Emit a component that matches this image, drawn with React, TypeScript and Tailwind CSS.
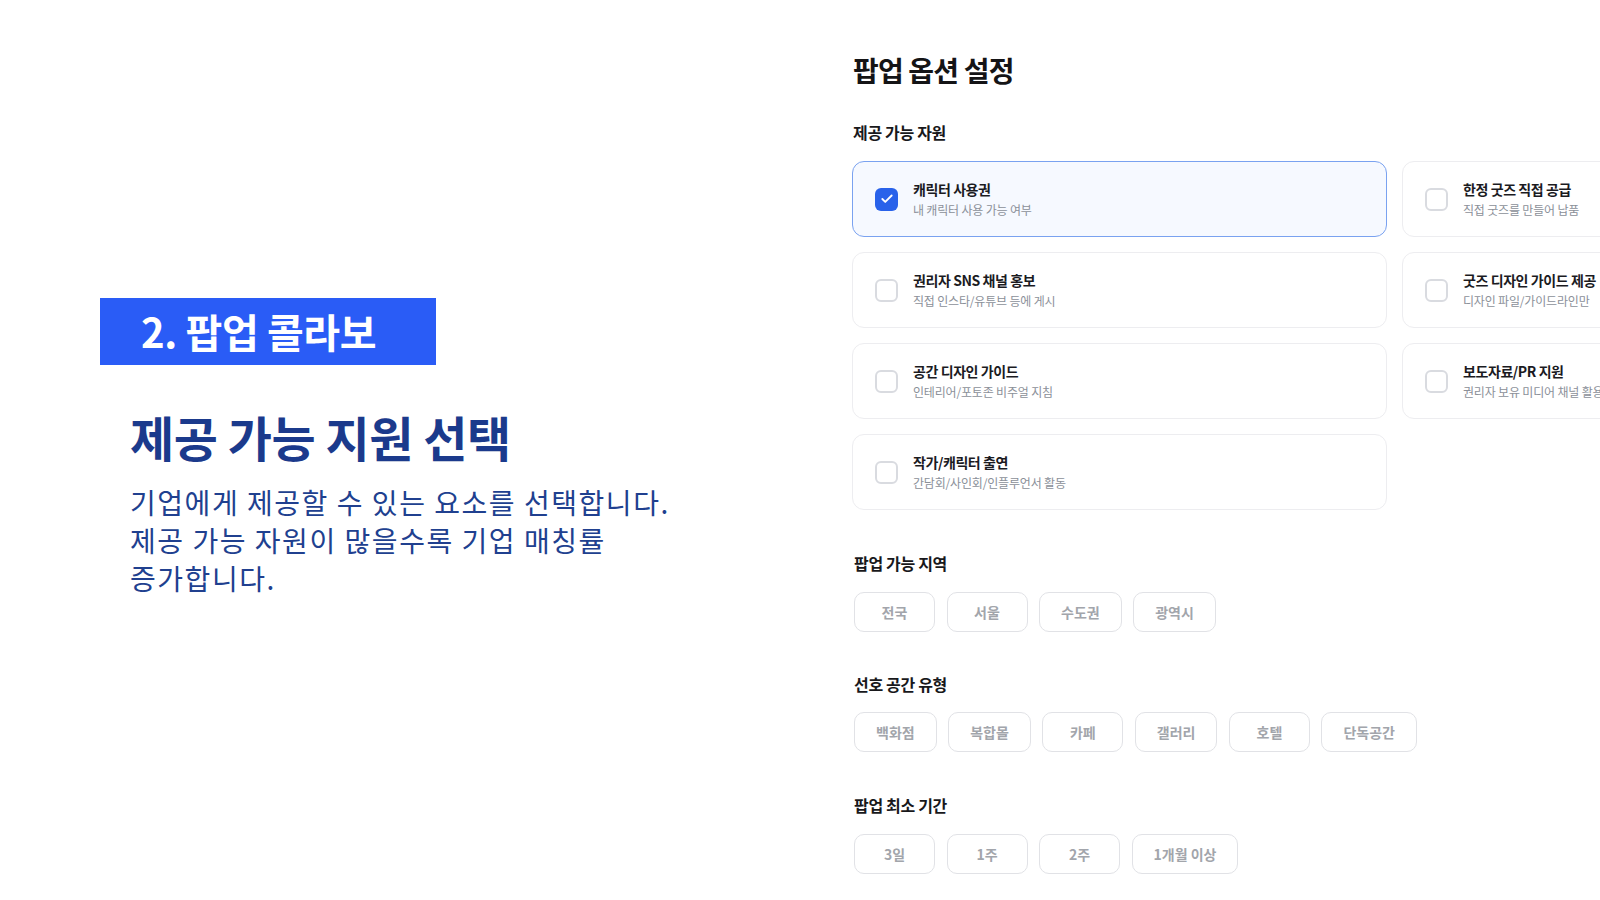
import { Check } from 'lucide-react'

interface ResourceOption {
  title: string
  desc: string
  checked?: boolean
}

const resources: ResourceOption[] = [
  { title: '캐릭터 사용권', desc: '내 캐릭터 사용 가능 여부', checked: true },
  { title: '한정 굿즈 직접 공급', desc: '직접 굿즈를 만들어 납품' },
  { title: '권리자 SNS 채널 홍보', desc: '직접 인스타/유튜브 등에 게시' },
  { title: '굿즈 디자인 가이드 제공', desc: '디자인 파일/가이드라인만' },
  { title: '공간 디자인 가이드', desc: '인테리어/포토존 비주얼 지침' },
  { title: '보도자료/PR 지원', desc: '권리자 보유 미디어 채널 활용' },
  { title: '작가/캐릭터 출연', desc: '간담회/사인회/인플루언서 활동' }
]

const regions = ['전국', '서울', '수도권', '광역시']
const spaces = ['백화점', '복합몰', '카페', '갤러리', '호텔', '단독공간']
const periods = ['3일', '1주', '2주', '1개월 이상']

const ResourceCard = (props: ResourceOption) => {
  return (
    <div
      className={
        props.checked
          ? 'flex h-[76px] items-center rounded-[12px] border-[1.5px] border-[#7aa2f0] bg-[#f6f9ff] pl-[22px]'
          : 'flex h-[76px] items-center rounded-[12px] border-[1.5px] border-[#ededf0] bg-white pl-[22px]'
      }
    >
      {props.checked ? (
        <div className="flex size-[23px] shrink-0 items-center justify-center rounded-[6px] bg-[#2962ea]">
          <Check size={14} strokeWidth={3.2} className="text-white" />
        </div>
      ) : (
        <div className="size-[23px] shrink-0 rounded-[6px] border-2 border-[#d9dbe0] bg-white" />
      )}
      <div className="ml-[15px] flex min-w-0 flex-col gap-[4px] whitespace-nowrap">
        <span className="text-[14px] leading-[18px] font-bold tracking-[-0.03em] text-[#1b1b1f]">{props.title}</span>
        <span className="text-[12px] leading-[16px] tracking-[-0.015em] text-[#8b9099]">{props.desc}</span>
      </div>
    </div>
  )
}

const ChipRow = (props: { items: string[] }) => {
  return (
    <div className="flex gap-[11.5px]">
      {props.items.map((item) => (
        <div
          key={item}
          className="flex h-[40px] min-w-[81px] items-center justify-center rounded-[10px] border-[1.5px] border-[#e1e2e6] bg-white px-[21px] text-[14px] font-semibold whitespace-nowrap text-[#a2a5ab]"
        >
          {item}
        </div>
      ))}
    </div>
  )
}

const SectionLabel = (props: { children: string }) => {
  return (
    <h3 className="text-[16px] leading-[20px] font-bold tracking-[-0.02em] text-[#18181b]">{props.children}</h3>
  )
}

export default function App() {
  return (
    <div
      className="flex h-[900px] w-[1600px] overflow-hidden bg-white"
      style={{ fontFamily: '"Noto Sans CJK KR", "Noto Sans", sans-serif' }}
    >
      <div className="flex w-[852px] shrink-0 flex-col pt-[298px] pl-[100px]">
        <div className="flex h-[67px] w-[336px] items-center bg-[#2a5cf6] pl-[41px]">
          <span className="text-[40px] leading-[67px] font-bold tracking-[-0.01em] text-white">2. 팝업 콜라보</span>
        </div>
        <div className="mt-[43px] ml-[30px]">
          <h1 className="text-[48px] leading-[56px] font-bold tracking-[-0.01em] text-[#1b3a8c]">제공 가능 지원 선택</h1>
          <p className="mt-[19px] w-[640px] text-[28px] leading-[38px] tracking-[0.055em] text-[#20408f]">
            기업에게 제공할 수 있는 요소를 선택합니다.
            <br />
            제공 가능 자원이 많을수록 기업 매칭률
            <br />
            증가합니다.
          </p>
        </div>
      </div>

      <div className="flex shrink-0 flex-col pt-[53px]">
        <h2 className="pl-px text-[28px] leading-[34px] font-bold tracking-[-0.03em] text-[#141416]">팝업 옵션 설정</h2>

        <div className="mt-[35px] pl-px">
          <SectionLabel>제공 가능 자원</SectionLabel>
        </div>
        <div className="mt-[19px] grid grid-cols-[535px_535px] gap-x-[15px] gap-y-[15px]">
          {resources.map((resource) => (
            <ResourceCard key={resource.title} {...resource} />
          ))}
        </div>

        <div className="mt-[43px] pl-[2px]">
          <SectionLabel>팝업 가능 지역</SectionLabel>
        </div>
        <div className="mt-[19px] pl-[2px]">
          <ChipRow items={regions} />
        </div>

        <div className="mt-[42px] pl-[2px]">
          <SectionLabel>선호 공간 유형</SectionLabel>
        </div>
        <div className="mt-[18px] pl-[2px]">
          <ChipRow items={spaces} />
        </div>

        <div className="mt-[43px] pl-[2px]">
          <SectionLabel>팝업 최소 기간</SectionLabel>
        </div>
        <div className="mt-[19px] pl-[2px]">
          <ChipRow items={periods} />
        </div>
      </div>
    </div>
  )
}
